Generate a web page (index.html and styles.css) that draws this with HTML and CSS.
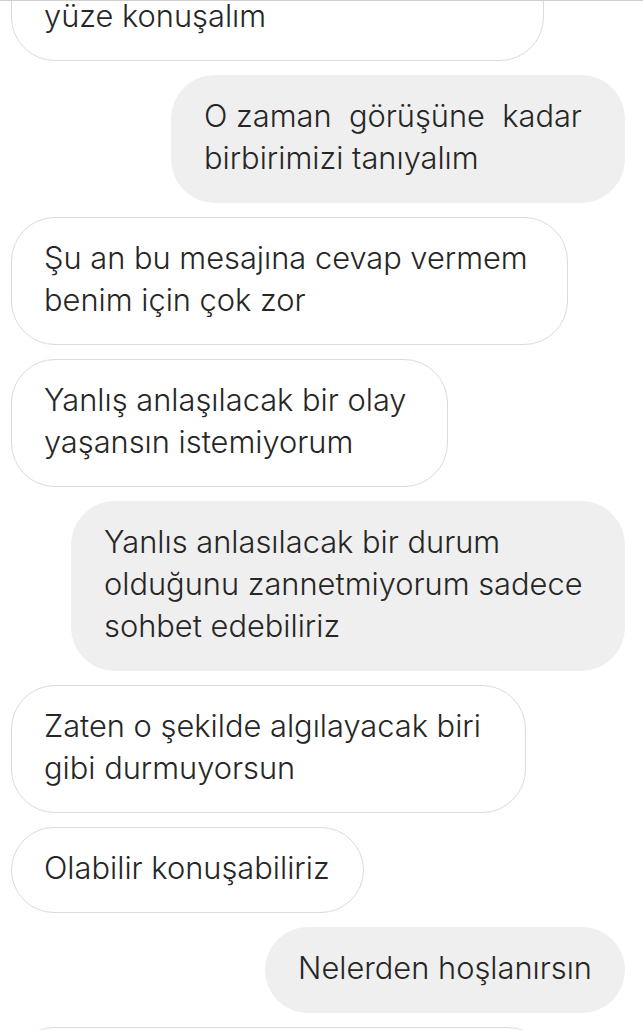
FILE: index.html
```html
<!DOCTYPE html>
<html lang="tr">
<head>
<meta charset="utf-8">
<title>Mesajlar</title>
<link rel="stylesheet" href="styles.css">
</head>
<body>
<main class="thread">
  <div class="bubble received clipped w-b1"><span class="txt">yüze konuşalım</span></div>
  <div class="bubble sent w-b2"><span class="txt">O zaman&nbsp; görüşüne&nbsp; kadar<br>birbirimizi tanıyalım</span></div>
  <div class="bubble received w-b3"><span class="txt">Şu an bu mesajına cevap vermem<br>benim için çok zor</span></div>
  <div class="bubble received w-b4"><span class="txt">Yanlış anlaşılacak bir olay<br>yaşansın istemiyorum</span></div>
  <div class="bubble sent w-b5"><span class="txt">Yanlıs anlasılacak bir durum<br>olduğunu zannetmiyorum sadece<br>sohbet edebiliriz</span></div>
  <div class="bubble received w-b6"><span class="txt">Zaten o şekilde algılayacak biri<br>gibi durmuyorsun</span></div>
  <div class="bubble received w-b7"><span class="txt">Olabilir konuşabiliriz</span></div>
  <div class="bubble sent w-b8"><span class="txt">Nelerden hoşlanırsın</span></div>
  <div class="bubble received w-b9"><span class="txt">&nbsp;</span></div>
</main>
</body>
</html>
```
FILE: styles.css
```css
* { box-sizing: border-box; }
html, body {
  margin: 0;
  padding: 0;
  background: #ffffff;
  height: 1030px;
  overflow: hidden;
}
body {
  font-family: "Inter", "Noto Sans", sans-serif;
  color: #262626;
}
.thread {
  display: flex;
  flex-direction: column;
  gap: 13.5px;
  padding: 0 18px 0 11px;
  border-top: 1px solid #cfcfcf;
  height: 1030px;
  overflow: hidden;
}
.bubble {
  font-size: 30.8px;
  font-weight: 350;
  line-height: 42px;
  border-radius: 44px;
  white-space: nowrap;
  flex: none;
}
.txt {
  position: relative;
  top: -2px;
}
.received {
  align-self: flex-start;
  background: #ffffff;
  border: 1px solid #dbdbdb;
  padding: 21.25px 20px 21.25px 32px;
}
.sent {
  align-self: flex-end;
  background: #efefef;
  padding: 22.25px 20px 22.25px 33px;
}
.clipped {
  padding-top: 82.25px;
  margin-top: -87.5px;
}
.w-b1 { width: 533px; }
.w-b2 { width: 454px; }
.w-b3 { width: 557px; }
.w-b4 { width: 437px; }
.w-b5 { width: 554px; }
.w-b6 { width: 515px; }
.w-b7 { width: 353px; }
.w-b8 { width: 360px; }
.w-b9 { width: 540px; }
```
